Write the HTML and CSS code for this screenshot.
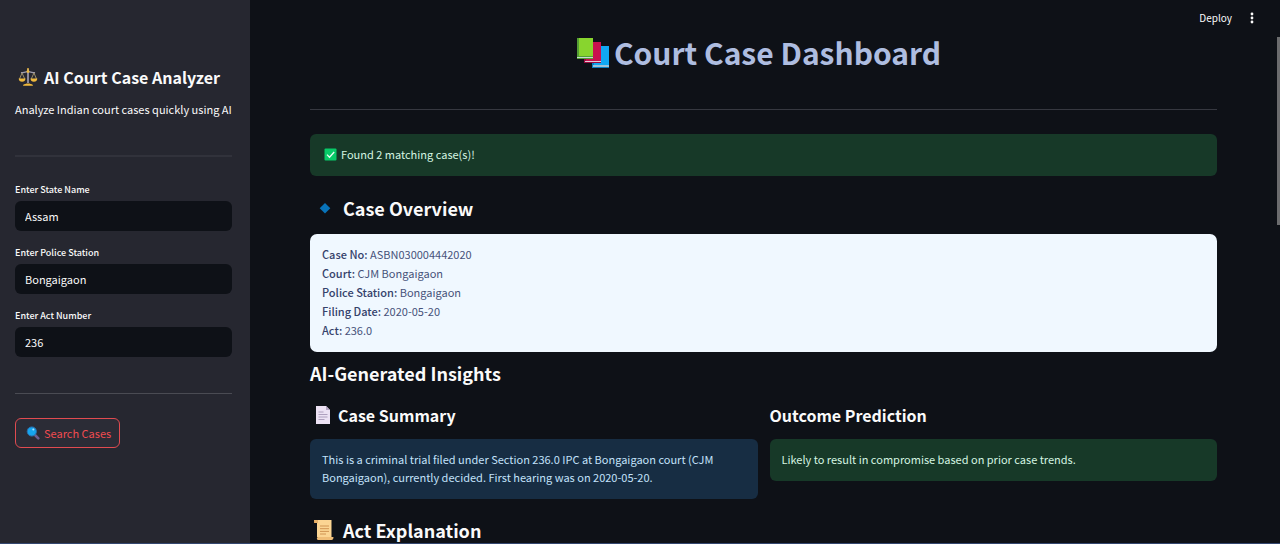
FILE: index.html
```html
<!DOCTYPE html>
<html lang="en">
<head>
<meta charset="utf-8">
<meta name="viewport" content="width=device-width, initial-scale=1">
<title>Court Case Dashboard</title>
<link rel="stylesheet" href="styles.css">
</head>
<body>
<div class="app">
  <aside class="sidebar">
    <h2 class="brand">
      <svg class="icon-scales" viewBox="0 0 20 20" aria-hidden="true">
        <path d="M10 2v14" stroke="#8d8a9b" stroke-width="2"/>
        <path d="M3 5.500c2 .8 3.500-.9 7-.9s5 1.700 7 .9" fill="none" stroke="#a09dac" stroke-width="1.300"/>
        <path d="M4 6 1.500 12M4 6l2.800 6M16 6l-2.800 6M16 6l2.500 6" stroke="#b8a778" stroke-width=".8"/>
        <path d="M.7 11.500h6.800c0 2-1.400 3.300-3.400 3.300S.7 13.500.7 11.500zM12.500 11.500h6.800c0 2-1.400 3.300-3.400 3.300s-3.400-1.300-3.400-3.300z" fill="#f0b93c"/>
        <circle cx="10" cy="4.500" r="1.400" fill="#f0b93c"/>
        <path d="M9.300 1h1.400v2H9.300zM5 18.800c0-1.500 2-1.500 3.500-2.200h3c1.500.7 3.500.7 3.500 2.200z" fill="#f0b93c"/>
      </svg>
      <span>AI Court Case Analyzer</span>
    </h2>
    <p class="tagline">Analyze Indian court cases quickly using AI</p>
    <hr class="rule rule-faint">
    <form class="search">
      <div class="field">
        <label for="state">Enter State Name</label>
        <input id="state" type="text" value="Assam">
      </div>
      <div class="field">
        <label for="station">Enter Police Station</label>
        <input id="station" type="text" value="Bongaigaon">
      </div>
      <div class="field">
        <label for="act">Enter Act Number</label>
        <input id="act" type="text" value="236">
      </div>
      <hr class="rule">
      <button class="search-button" type="button">
        <svg class="icon-small" viewBox="0 0 14 14" aria-hidden="true">
          <path d="m9 9 3.300 3.300" stroke="#6d5f91" stroke-width="2.600" stroke-linecap="round"/>
          <circle cx="5.800" cy="5.500" r="4.600" fill="#16a5ee" stroke="#2a6fae" stroke-width="1"/>
          <circle cx="7.300" cy="3.600" r="1" fill="#a9e2ff"/>
        </svg>
        <span>Search Cases</span>
      </button>
    </form>
  </aside>

  <main class="main">
    <div class="toolbar">
      <button class="deploy" type="button">Deploy</button>
      <button class="menu" type="button" aria-label="Menu">
        <svg class="icon-menu" viewBox="0 0 4 12" aria-hidden="true" fill="#fafafa"><circle cx="2" cy="2" r="1.400"/><circle cx="2" cy="6" r="1.400"/><circle cx="2" cy="10" r="1.400"/></svg>
      </button>
    </div>

    <h1 class="title">
      <svg class="icon-books" viewBox="0 0 34 32" aria-hidden="true">
        <path d="M16 9h17v22H16z" fill="#087fc2"/><path d="M18 9h15v19H18z" fill="#10a8f3"/><path d="M17 28h16v2H17z" fill="#9cc3d8"/>
        <path d="M8 5h17v21H8z" fill="#960c3e"/><path d="M10 5h15v19H10z" fill="#c9104f"/><path d="M9 24h16v1H9z" fill="#e2cfda"/>
        <path d="M1 1h16v21H1z" fill="#549e35"/><path d="M3 1h14v18H3z" fill="#88d52e"/><path d="M1 20h16v1H1z" fill="#c5dfcf"/>
      </svg>
      <span>Court Case Dashboard</span>
    </h1>
    <hr class="rule">

    <div class="alert alert-success">
      <svg class="icon-check" viewBox="0 0 13 13" aria-hidden="true"><rect x=".5" y=".5" width="12" height="12" rx="1" fill="#08ca68"/><path d="m3 6.600 2.500 2.600L10.200 4" fill="none" stroke="#e9fff3" stroke-width="1.300"/></svg>
      <span>Found 2 matching case(s)!</span>
    </div>

    <h2 class="section">
      <svg class="icon-section" viewBox="0 0 22 22" aria-hidden="true"><path d="m12 6 5.300 5.300-5.300 5.300-5.300-5.300z" fill="#0873b9"/></svg>
      <span>Case Overview</span>
    </h2>
    <div class="card">
      <p><b>Case No:</b> ASBN030004442020</p>
      <p><b>Court:</b> CJM Bongaigaon</p>
      <p><b>Police Station:</b> Bongaigaon</p>
      <p><b>Filing Date:</b> 2020-05-20</p>
      <p><b>Act:</b> 236.0</p>
    </div>

    <h2 class="section">AI-Generated Insights</h2>
    <div class="columns">
      <section>
        <h3 class="subsection">
          <svg class="icon-page" viewBox="0 0 16 20" aria-hidden="true"><path d="M1 1h10l4 4v14H1z" fill="#ece2f4"/><path d="M11 1v4h4z" fill="#b5a6c4"/><path d="M3.500 7h5M3.500 9.500h9M3.500 12h9M3.500 14.500h6" stroke="#a798b8" stroke-width=".9"/></svg>
          <span>Case Summary</span>
        </h3>
        <div class="alert alert-info">This is a criminal trial filed under Section 236.0 IPC at Bongaigaon court (CJM Bongaigaon), currently decided. First hearing was on 2020-05-20.</div>
      </section>
      <section>
        <h3 class="subsection">Outcome Prediction</h3>
        <div class="alert alert-success">Likely to result in compromise based on prior case trends.</div>
      </section>
    </div>

    <h2 class="section section-last">
      <svg class="icon-section" viewBox="0 0 22 22" aria-hidden="true"><path d="M1 1h17v3H1z" fill="#d99b55"/><path d="M4 1h14.500v17H4z" fill="#fbd593"/><path d="M1 1h4v3H2z" fill="#e8b36c"/><path d="M5 18h15.500c0 2-.8 3-2 3H5c-1.500 0-1.500-3 0-3z" fill="#efbd77"/><path d="M7 7h9M7 9.700h9M7 12.400h9M7 15h6" stroke="#cf9452" stroke-width="1"/></svg>
      <span>Act Explanation</span>
    </h2>
    <div class="scrollbar" aria-hidden="true"></div>
  </main>
</div>
</body>
</html>
```
FILE: styles.css
```css
* { box-sizing: border-box; }

body {
  margin: 0;
  background: #0e1117;
  color: #fafafa;
  font-family: "Noto Sans CJK SC", "Noto Sans", sans-serif;
  font-size: 11px;
  line-height: 18px;
}

h1, h2, h3, p { margin: 0; }

button, input { font: inherit; color: inherit; }

svg { display: block; flex: none; }

.app {
  display: flex;
  height: 100vh;
  overflow: hidden;
  border-bottom: 1px solid #34476f;
}

.sidebar {
  flex: none;
  width: 250px;
  padding: 65px 18px 0 15px;
  background: #262730;
}

.brand {
  display: flex;
  align-items: center;
  gap: 6px;
  padding-left: 3px;
  font-size: 16px;
  font-weight: 700;
  line-height: 24px;
  white-space: nowrap;
}

.tagline { margin-top: 11px; white-space: nowrap; }

.rule {
  margin: 0;
  border: 0;
  border-top: 1px solid #363840;
}

.sidebar .rule { border-color: #4a4b53; }

.sidebar .rule-faint {
  margin: 37px 0 24px;
  border-top: 2px solid #31323b;
}

.search {
  display: flex;
  flex-direction: column;
  gap: 13px;
}

.search .rule { margin: 23px 0 11px; }

.field label {
  display: block;
  margin-bottom: 2px;
  font-size: 9px;
  font-weight: 500;
}

.field input {
  display: block;
  width: 100%;
  height: 30px;
  padding: 0 10px;
  border: 0;
  border-radius: 6px;
  background: #0e1117;
}

.search-button {
  display: flex;
  align-items: center;
  align-self: flex-start;
  gap: 4px;
  height: 30px;
  padding: 0 8px 0 10px;
  border: 1px solid #e04b50;
  border-radius: 6px;
  background: #2b2c36;
  color: #f04b50;
  white-space: nowrap;
}

.main {
  position: relative;
  flex: 1;
  min-width: 0;
  overflow: hidden;
  padding: 0 63px 0 60px;
}

.toolbar {
  position: absolute;
  top: 9px;
  right: 26px;
  display: flex;
  align-items: center;
  gap: 18px;
}

.toolbar button {
  padding: 0;
  border: 0;
  background: none;
  font-size: 10px;
}

.title {
  display: flex;
  align-items: center;
  justify-content: center;
  gap: 4px;
  padding: 32px 10px 36px 0;
  color: #aebde0;
  font-size: 30px;
  font-weight: 700;
  line-height: 41px;
}

.alert {
  padding: 11px 12px 13px;
  border-radius: 6px;
}

.main > .alert {
  display: flex;
  align-items: center;
  gap: 4px;
  margin-top: 24px;
  padding-left: 14px;
}

.alert-success { background: #173928; color: #d5f5e2; }

.alert-info { background: #172d43; color: #c3e2fb; }

.section {
  display: flex;
  align-items: center;
  gap: 8px;
  font-size: 18px;
  font-weight: 700;
  line-height: 26px;
}

.main > .alert + .section { margin: 19px 0 13px; }

.icon-section { margin-left: 3px; }

.card {
  margin-bottom: 8px;
  padding: 11px 12px 12px;
  border-radius: 7px;
  background: #f0f8ff;
  color: #47527a;
}

.card p { line-height: 19px; }

.card b { color: #35426b; font-weight: 500; }

.columns {
  display: grid;
  grid-template-columns: 1fr 1fr;
  gap: 12px;
  margin-top: 17px;
}

.subsection {
  display: flex;
  align-items: center;
  gap: 7px;
  margin-bottom: 12px;
  font-size: 16px;
  font-weight: 700;
  line-height: 24px;
}

.section-last {
  margin-top: 19px;
  line-height: 24px;
}

.scrollbar {
  position: absolute;
  top: 37px;
  right: 0;
  width: 3px;
  height: 188px;
  background: #6b6c6e;
}

.icon-scales { width: 20px; height: 20px; }
.icon-small { width: 14px; height: 14px; }
.icon-menu { width: 4px; height: 12px; }
.icon-books { width: 34px; height: 32px; }
.icon-check { width: 13px; height: 13px; }
.icon-section { width: 22px; height: 22px; }
.icon-page { width: 16px; height: 20px; margin-left: 5px; }
```
